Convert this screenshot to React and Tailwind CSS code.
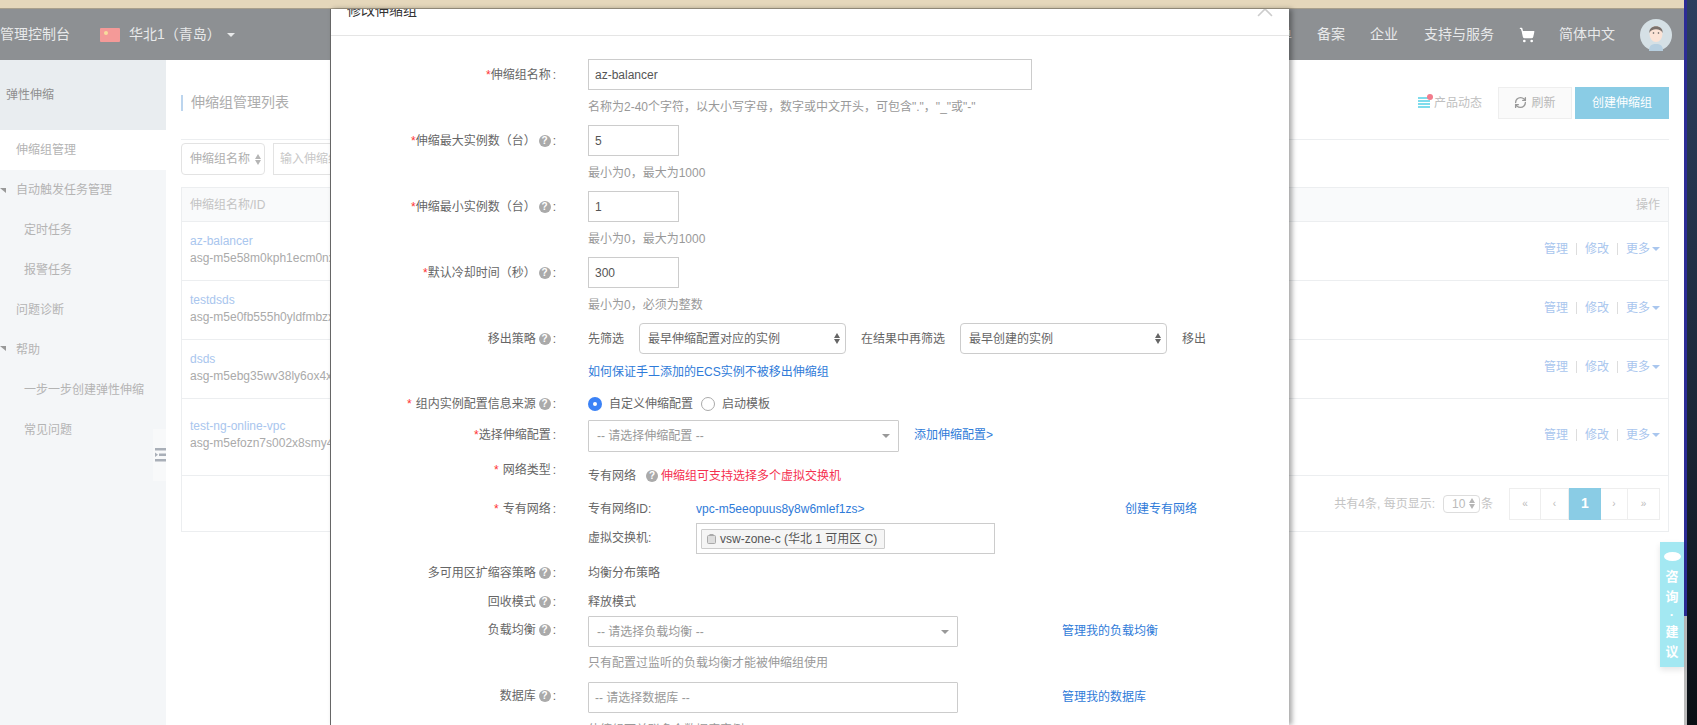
import React from 'react';
import { RefreshCw, ShoppingCart, X } from 'lucide-react';

const groups = [
  { name: 'az-balancer', id: 'asg-m5e58m0kph1ecm0nxxxx', h: 'h-[59px]', pt: 'pt-[11px]', actionPt: 'pt-[18px]' },
  { name: 'testdsds', id: 'asg-m5e0fb555h0yldfmbzxx', h: 'h-[59px]', pt: 'pt-[11px]', actionPt: 'pt-[18px]' },
  { name: 'dsds', id: 'asg-m5ebg35wv38ly6ox4xxx', h: 'h-[59px]', pt: 'pt-[11px]', actionPt: 'pt-[18px]' },
  { name: 'test-ng-online-vpc', id: 'asg-m5efozn7s002x8smy4xx', h: 'h-[77px]', pt: 'pt-[19px]', actionPt: 'pt-[27px]' },
];

const Caret = ({ className }) => (
  <span className={`inline-block w-0 h-0 border-x-[4px] border-x-transparent border-t-[4px] ${className}`} />
);

const UpDown = ({ light }) => (
  <span className="flex flex-col gap-[1px]">
    <span className={`w-0 h-0 border-x-[3px] border-x-transparent border-b-[5px] ${light ? 'border-b-[#b5b5b5]' : 'border-b-[#666]'}`} />
    <span className={`w-0 h-0 border-x-[3px] border-x-transparent border-t-[5px] ${light ? 'border-t-[#b5b5b5]' : 'border-t-[#666]'}`} />
  </span>
);

const Help = ({ className = 'ml-[3px]' }) => (
  <span className={`inline-flex items-center justify-center w-[12px] h-[12px] rounded-full bg-[#aaa] text-white text-[10px] font-bold leading-none ${className}`}>?</span>
);

const Label = ({ star, children, help, tight }) => (
  <div className="w-[225px] h-[18px] shrink-0 flex items-center justify-end text-[12px] text-[#666] leading-[18px] whitespace-pre">
    {star && <span className={`text-[#f33] ${tight ? '' : 'mr-[4px]'}`}>*</span>}
    {children}
    {help && <Help />}
    <span className="ml-[2px]">:</span>
  </div>
);

const HelpText = ({ className, children }) => (
  <div className={`pl-[257px] h-[18px] leading-[18px] text-[12px] text-[#999] ${className}`}>{children}</div>
);

const TextInput = ({ w, value }) => (
  <div className={`${w} h-[31px] border border-[#ccc] flex items-center pl-[6px] text-[12px] text-[#555]`}>{value}</div>
);

const PickerBox = ({ w, text }) => (
  <div className={`${w} border border-[#ccc] rounded-[1px] flex items-center justify-between pl-[8px] pr-[8px] text-[12px] text-[#999]`}>
    {text}
    <Caret className="border-t-[#999]" />
  </div>
);

const NativeSelect = ({ w, text }) => (
  <div className={`${w} h-[31px] border border-[#ccc] rounded-[4px] flex items-center justify-between pl-[8px] pr-[5px] text-[12px] text-[#666]`}>
    {text}
    <UpDown />
  </div>
);

const Modal = () => (
  <div className="absolute left-[330px] top-[9px] w-[959px] h-[716px] overflow-hidden bg-white border-l border-l-[#666] shadow-[3px_0_5px_rgba(0,0,0,0.35)]">
    <div className="relative h-[27px] border-b border-b-[#e5e5e5]">
      <span className="absolute left-[16px] -top-[9px] text-[14px] leading-[20px] text-[#333]">修改伸缩组</span>
      <X className="absolute right-[11px] -top-[13px] text-[#ccc]" size={26} strokeWidth={1.5} />
    </div>

    <div className="flex items-center mt-[23px] gap-[32px]">
      <Label star tight>伸缩组名称</Label>
      <TextInput w="w-[444px]" value="az-balancer" />
    </div>
    <HelpText className="mt-[8px]">名称为2-40个字符，以大小写字母，数字或中文开头，可包含"."，"_"或"-"</HelpText>

    <div className="flex items-center mt-[9px] gap-[32px]">
      <Label star tight help>伸缩最大实例数（台）</Label>
      <TextInput w="w-[91px]" value="5" />
    </div>
    <HelpText className="mt-[8px]">最小为0，最大为1000</HelpText>

    <div className="flex items-center mt-[9px] gap-[32px]">
      <Label star tight help>伸缩最小实例数（台）</Label>
      <TextInput w="w-[91px]" value="1" />
    </div>
    <HelpText className="mt-[8px]">最小为0，最大为1000</HelpText>

    <div className="flex items-center mt-[9px] gap-[32px]">
      <Label star tight help>默认冷却时间（秒）</Label>
      <TextInput w="w-[91px]" value="300" />
    </div>
    <HelpText className="mt-[8px]">最小为0，必须为整数</HelpText>

    <div className="flex items-center mt-[9px] gap-[32px] text-[12px] text-[#666]">
      <Label help>移出策略</Label>
      <div className="flex items-center">
        <span className="w-[51px]">先筛选</span>
        <NativeSelect w="w-[207px]" text="最早伸缩配置对应的实例" />
        <span className="ml-[15px] w-[99px]">在结果中再筛选</span>
        <NativeSelect w="w-[207px]" text="最早创建的实例" />
        <span className="ml-[15px]">移出</span>
      </div>
    </div>
    <div className="pl-[257px] mt-[9px] h-[18px] leading-[18px] text-[12px] text-[#2f7bd9]">如何保证手工添加的ECS实例不被移出伸缩组</div>

    <div className="flex items-center mt-[14px] gap-[32px] text-[12px] text-[#666]">
      <Label star help>组内实例配置信息来源</Label>
      <div className="flex items-center">
        <span className="flex items-center justify-center w-[14px] h-[14px] rounded-full bg-[#3b82f6]">
          <span className="w-[4px] h-[4px] rounded-full bg-white" />
        </span>
        <span className="ml-[7px]">自定义伸缩配置</span>
        <span className="ml-[8px] w-[14px] h-[14px] rounded-full border border-[#aaa]" />
        <span className="ml-[7px]">启动模板</span>
      </div>
    </div>

    <div className="flex items-start mt-[7px] gap-[32px]">
      <div className="mt-[6px]"><Label star tight>选择伸缩配置</Label></div>
      <PickerBox w="w-[311px] h-[32px]" text="-- 请选择伸缩配置 --" />
      <span className="-ml-[17px] mt-[6px] text-[12px] leading-[18px] text-[#2f7bd9]">添加伸缩配置&gt;</span>
    </div>

    <div className="flex items-start mt-[9px] h-[24px] gap-[32px] text-[12px] text-[#666]">
      <Label star>网络类型</Label>
      <div className="flex items-center mt-[6px] h-[18px]">
        专有网络
        <Help className="ml-[10px]" />
        <span className="ml-[3px] text-[#f5304f]">伸缩组可支持选择多个虚拟交换机</span>
      </div>
    </div>

    <div className="flex items-center mt-[15px] gap-[32px] text-[12px] text-[#666]">
      <Label star>专有网络</Label>
      <span className="w-[108px]">专有网络ID:</span>
      <span className="-ml-[32px] w-[429px] text-[#2f7bd9]">vpc-m5eeopuus8y8w6mlef1zs&gt;</span>
      <span className="-ml-[32px] text-[#2f7bd9]">创建专有网络</span>
    </div>

    <div className="flex mt-[5px] pl-[257px] text-[12px] text-[#666]">
      <span className="w-[108px] h-[31px] leading-[31px]">虚拟交换机:</span>
      <div className="w-[299px] h-[31px] border border-[#ccc] flex items-center pl-[4px]">
        <div className="h-[20px] w-[184px] border border-[#ccc] bg-[#f5f5f5] rounded-[1px] flex items-center pl-[5px] text-[#555] whitespace-pre">
          <svg width="9" height="10" viewBox="0 0 9 10" className="mr-[4px]"><rect x="0.5" y="1.5" width="8" height="8" rx="1" fill="#ddd" stroke="#aaa" /><rect x="2.5" y="0" width="4" height="2" fill="#aaa" /></svg>
          vsw-zone-c (华北 1 可用区 C)
        </div>
      </div>
    </div>

    <div className="flex items-center mt-[10px] gap-[32px] text-[12px] text-[#666]">
      <Label help>多可用区扩缩容策略</Label>
      均衡分布策略
    </div>
    <div className="flex items-center mt-[11px] gap-[32px] text-[12px] text-[#666]">
      <Label help>回收模式</Label>
      释放模式
    </div>

    <div className="flex items-start mt-[5px] gap-[32px]">
      <div className="mt-[5px]"><Label help>负载均衡</Label></div>
      <PickerBox w="w-[370px] h-[31px]" text="-- 请选择负载均衡 --" />
      <span className="mt-[6px] ml-[72px] text-[12px] leading-[18px] text-[#2f7bd9]">管理我的负载均衡</span>
    </div>
    <HelpText className="mt-[7px]">只有配置过监听的负载均衡才能被伸缩组使用</HelpText>

    <div className="flex items-start mt-[10px] gap-[32px]">
      <div className="mt-[5px]"><Label help>数据库</Label></div>
      <div className="w-[370px] h-[31px] border border-[#ccc] rounded-[1px] flex items-center pl-[6px] text-[12px] text-[#999]">-- 请选择数据库 --</div>
      <span className="mt-[6px] ml-[72px] text-[12px] leading-[18px] text-[#2f7bd9]">管理我的数据库</span>
    </div>
    <HelpText className="mt-[8px]">伸缩组可关联多个数据库实例</HelpText>
  </div>
);

const Header = () => (
  <div className="h-[51px] shrink-0 bg-[#8d9093] flex items-center text-[14px] text-[#e8e9ea]">
    <span className="w-[100px]">管理控制台</span>
    <svg width="20" height="14" viewBox="0 0 20 14">
      <rect width="20" height="14" rx="1" fill="#f49a98" />
      <circle cx="6" cy="5" r="2" fill="#f7dc9c" />
    </svg>
    <span className="ml-[9px]">华北1（青岛）</span>
    <Caret className="ml-[6px] border-t-[#e8e9ea]" />
    <div className="ml-auto flex items-center">
      <span className="mr-[25px]">工单</span>
      <span className="mr-[25px]">备案</span>
      <span className="mr-[26px]">企业</span>
      <span className="mr-[25px]">支持与服务</span>
      <ShoppingCart className="mr-[24px] text-white fill-white" size={16} />
      <span className="mr-[25px]">简体中文</span>
      <svg width="32" height="32" viewBox="0 0 32 32" className="mr-[12px]">
        <circle cx="16" cy="16" r="16" fill="#d5e0e5" />
        <path d="M9 32 C9 26 12 25 16 25 C20 25 23 26 23 32 Z" fill="#b7cfe0" />
        <ellipse cx="16" cy="15" rx="6.5" ry="8" fill="#fbe3d6" />
        <path d="M9.5 14 C8 5 24 5 22.5 14 C21 9 11 9 9.5 14 Z" fill="#7a716c" />
        <circle cx="13.5" cy="14" r="0.8" fill="#555" />
        <circle cx="18.5" cy="14" r="0.8" fill="#555" />
      </svg>
    </div>
  </div>
);

const Sidebar = () => (
  <div className="relative w-[166px] shrink-0 bg-[#f4f6f8] text-[12px] text-[#b4b4b4]">
    <div className="h-[70px] bg-[#e9edf0] flex items-center pl-[6px] text-[#8f8f8f]">弹性伸缩</div>
    <div className="h-[40px] bg-white flex items-center pl-[16px]">伸缩组管理</div>
    <div className="relative h-[40px] flex items-center pl-[16px]">
      <span className="absolute left-0 top-[18px] w-0 h-0 border-l-[6px] border-l-transparent border-t-[5px] border-t-[#999]" />
      自动触发任务管理
    </div>
    <div className="h-[40px] flex items-center pl-[24px]">定时任务</div>
    <div className="h-[40px] flex items-center pl-[24px]">报警任务</div>
    <div className="h-[40px] flex items-center pl-[16px]">问题诊断</div>
    <div className="relative h-[40px] flex items-center pl-[16px]">
      <span className="absolute left-0 top-[16px] w-0 h-0 border-l-[6px] border-l-transparent border-t-[5px] border-t-[#999]" />
      帮助
    </div>
    <div className="h-[40px] flex items-center pl-[24px]">一步一步创建弹性伸缩</div>
    <div className="h-[40px] flex items-center pl-[24px]">常见问题</div>
    <div className="absolute right-0 top-[369px] w-[13px] h-[52px] bg-[#f8f9fa] flex items-center justify-end">
      <svg width="11" height="14" viewBox="0 0 11 14" fill="#a9afb8">
        <rect width="11" height="2.5" />
        <rect x="4" y="5.5" width="7" height="2.5" />
        <rect y="11" width="11" height="2.5" />
        <path d="M0 4.5 L3 6.7 L0 9 Z" />
      </svg>
    </div>
  </div>
);

const PageButton = ({ w, children, active }) => (
  <div className={`${w} h-[32px] flex items-center justify-center ${active ? 'bg-[#8accE5] text-white text-[14px] font-bold' : 'text-[10px] border-y border-r border-[#eee] text-[#bbb]'}`}>
    {children}
  </div>
);

const Main = () => (
  <div className="flex-1 min-w-0 bg-white px-[15px] text-[12px] text-[#b0b0b0]">
    <div className="h-[80px] border-b border-b-[#eceef0] flex items-center">
      <span className="w-[2px] h-[16px] bg-[#bcd5ee] mt-[6px]" />
      <span className="ml-[8px] mt-[6px] text-[14px] text-[#adadad]">伸缩组管理列表</span>
      <div className="ml-auto flex items-center mt-[6px]">
        <div className="relative w-[12px] h-[12px] flex flex-col justify-between mr-[4px]">
          <span className="h-[2px] bg-[#7fdcec]" />
          <span className="h-[2px] bg-[#7fdcec]" />
          <span className="h-[2px] bg-[#7fdcec]" />
          <span className="h-[2px] bg-[#7fdcec]" />
          <span className="absolute -right-[3px] -top-[3px] w-[6px] h-[6px] rounded-full bg-[#f27c8c]" />
        </div>
        <span className="mr-[16px] text-[#c0c0c0]">产品动态</span>
        <div className="w-[74px] h-[32px] bg-[#fafafa] border border-[#eee] flex items-center justify-center gap-[4px] text-[#b8b8b8]">
          <RefreshCw size={13} className="text-[#999]" strokeWidth={2.5} />
          刷新
        </div>
        <div className="ml-[3px] w-[94px] h-[32px] bg-[#8accE5] flex items-center justify-center text-white">创建伸缩组</div>
      </div>
    </div>

    <div className="flex mt-[3px]">
      <div className="w-[84px] h-[32px] border border-[#e3e3e3] rounded-[4px] flex items-center justify-between pl-[8px] pr-[3px] text-[#b0b0b0]">
        伸缩组名称
        <UpDown light />
      </div>
      <div className="ml-[8px] w-[300px] h-[32px] border border-[#e3e3e3] flex items-center pl-[6px] text-[#c8c8c8] whitespace-nowrap">输入伸缩组名称进行搜索</div>
    </div>

    <div className="mt-[12px] border border-[#eceef0]">
      <div className="h-[34px] bg-[#f9fafb] border-b border-b-[#eceef0] flex items-center justify-between px-[8px] text-[#c4c4c4]">
        <span>伸缩组名称/ID</span>
        <span>操作</span>
      </div>
      {groups.map(g => (
        <div key={g.name} className={`${g.h} border-b border-b-[#eceef0] flex justify-between px-[8px]`}>
          <div className={g.pt}>
            <div className="leading-[17px] text-[#a9c6ee]">{g.name}</div>
            <div className="leading-[17px] text-[#aaa]">{g.id}</div>
          </div>
          <div className={`${g.actionPt} text-[#a9c6ee] flex items-start leading-[18px]`}>
            <span>管理</span>
            <span className="ml-[8px] mr-[8px] mt-[3px] w-px h-[12px] bg-[#ddd]" />
            <span>修改</span>
            <span className="ml-[8px] mr-[8px] mt-[3px] w-px h-[12px] bg-[#ddd]" />
            <span className="flex items-center gap-[2px]">更多<Caret className="border-t-[#a9c6ee]" /></span>
          </div>
        </div>
      ))}
      <div className="h-[55px] flex items-center justify-end pr-[8px] text-[#c4c4c4]">
        <span>共有4条, 每页显示:</span>
        <div className="ml-[8px] w-[37px] h-[18px] border border-[#ddd] rounded-[4px] flex items-center justify-between pl-[8px] pr-[4px] text-[#bbb]">
          10
          <UpDown light />
        </div>
        <span className="ml-[1px]">条</span>
        <div className="ml-[16px] flex border-l border-l-[#eee]">
          <PageButton w="w-[31px]">«</PageButton>
          <PageButton w="w-[28px]">‹</PageButton>
          <PageButton w="w-[32px]" active>1</PageButton>
          <PageButton w="w-[27px]">›</PageButton>
          <PageButton w="w-[32px]">»</PageButton>
        </div>
      </div>
    </div>
  </div>
);

export default function App() {
  return (
    <div className="relative w-[1697px] h-[725px] overflow-hidden flex bg-white font-['Liberation_Sans','Noto_Sans_CJK_SC',sans-serif]">
      <div className="relative w-[1684px] shrink-0 flex flex-col">
        <div className="h-[9px] shrink-0 bg-[#e5d7bb] border-b border-b-[#a89f8c]" />
        <Header />
        <div className="flex flex-1 min-h-0">
          <Sidebar />
          <Main />
        </div>
        <Modal />
        <div className="absolute right-0 top-[542px] w-[24px] h-[125px] bg-[#a3e8f2] shadow-[0_3px_6px_rgba(0,0,0,0.1)] flex flex-col items-center pt-[10px] text-white text-[13px] font-bold">
          <span className="w-[17px] h-[9px] rounded-[50%] bg-white mb-[6px]" />
          <span className="leading-[20px]">咨</span>
          <span className="leading-[20px]">询</span>
          <span className="leading-[15px]">·</span>
          <span className="leading-[20px]">建</span>
          <span className="leading-[20px]">议</span>
        </div>
      </div>
      <div className="w-[3px] shrink-0 bg-[linear-gradient(to_bottom,#2c2c96_0,#2c2c96_85%,#bbb_85%,#bbb_100%)]" />
      <div className="flex-1 bg-[linear-gradient(to_bottom,#2c3f5f,#1a2636_60%,#0a0f14)]" />
    </div>
  );
}
